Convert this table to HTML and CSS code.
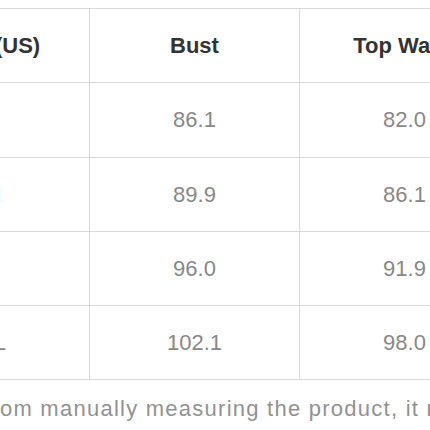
FILE: index.html
```html
<!DOCTYPE html>
<html>
<head>
<meta charset="utf-8">
<link rel="stylesheet" href="styles.css">
</head>
<body>
<div class="page">
  <table class="chart">
    <colgroup>
      <col class="c1"><col class="c2"><col class="c3">
    </colgroup>
    <thead>
      <tr class="r-head"><th>Size (US)</th><th>Bust</th><th>Top Waist</th></tr>
    </thead>
    <tbody>
      <tr class="r-a"><td>S</td><td>86.1</td><td>82.0</td></tr>
      <tr><td>M</td><td>89.9</td><td>86.1</td></tr>
      <tr><td>L</td><td>96.0</td><td>91.9</td></tr>
      <tr><td>XL</td><td>102.1</td><td>98.0</td></tr>
    </tbody>
  </table>
  <p class="note">from manually measuring the product, it may be off by 1-2 CM.</p>
</div>
</body>
</html>
```

FILE: styles.css
```css
html, body {
  margin: 0;
  padding: 0;
  background: #ffffff;
  overflow: hidden;
}

.page {
  width: 430px;
  height: 430px;
  overflow: hidden;
  padding-top: 8px;
  box-sizing: border-box;
}

.chart {
  border-collapse: collapse;
  table-layout: fixed;
  width: 614px;
  margin-left: -105px;
  font-family: "Liberation Sans", Arial, sans-serif;
  font-size: 22px;
}

.c1 { width: 194px; }
.c2 { width: 210px; }
.c3 { width: 210px; }

.chart th,
.chart td {
  border: 1px solid #d9d9d9;
  text-align: center;
  vertical-align: middle;
  padding: 0;
  height: 73px;
}

.chart th {
  color: #333333;
  font-weight: bold;
}

.chart td {
  color: #888888;
  font-weight: normal;
}

.chart .r-a td {
  height: 74px;
}

.note {
  margin: 14px 0 0 -16px;
  font-family: "Liberation Sans", Arial, sans-serif;
  font-size: 22px;
  line-height: 30px;
  letter-spacing: 1.25px;
  color: #929292;
  white-space: nowrap;
}
```
